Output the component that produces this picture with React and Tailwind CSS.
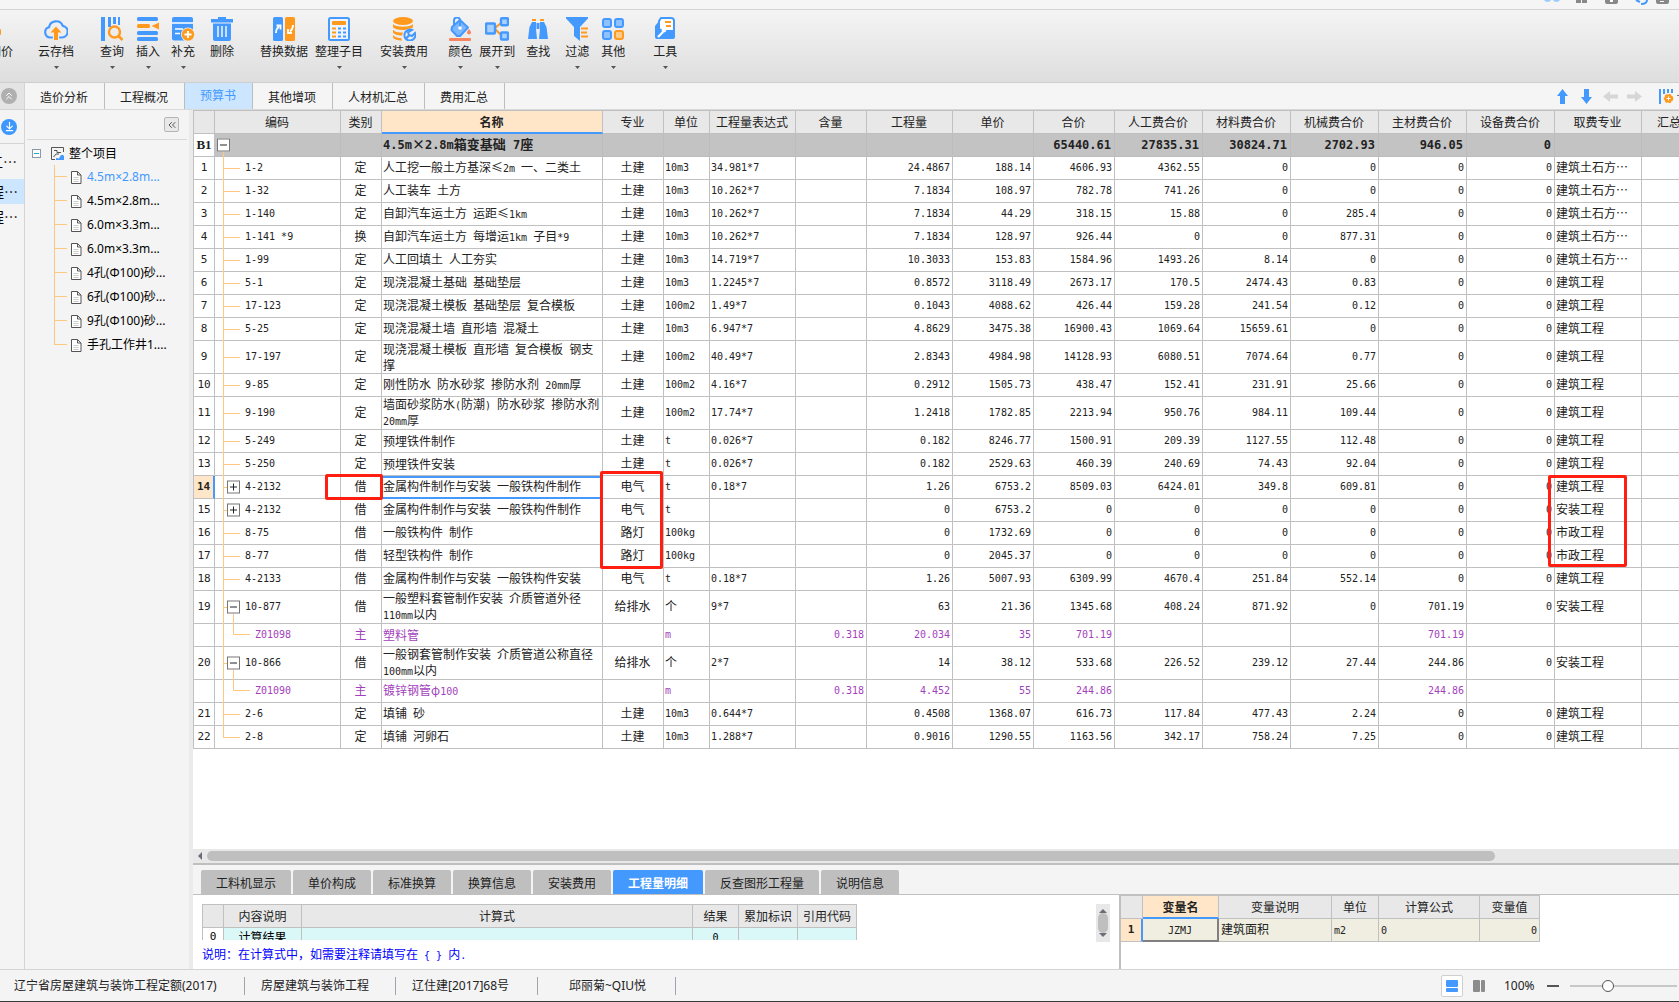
import React, { useState } from 'react';
import { ChevronsUp, ChevronsLeft, ArrowDownToLine } from 'lucide-react';

const BLUE = '#4499ff';
const ORANGE = '#ff9a1f';

const Icon = ({ children }) => (
  <svg width="24" height="24" viewBox="0 0 24 24" fill="none" aria-hidden="true">
    {children}
  </svg>
);

const CloudIcon = () => (
  <Icon>
    <path d="M8 20.5H6.2A5.2 5.2 0 0 1 5 10.300A7.200 7.200 0 0 1 18.800 8.800A5.900 5.900 0 0 1 18 20.500H16" stroke={BLUE} strokeWidth="2.2" strokeLinecap="round" />
    <path d="M12 9.500L17.500 15.500H14V23H10V15.500H6.500Z" fill={ORANGE} />
  </Icon>
);

const QueryIcon = () => (
  <Icon>
    <path d="M1 0h4v24H1zM8 0h3v10H8zM13 0h3v7h-3zM18 0h2v8h-2z" fill={BLUE} />
    <circle cx="14.500" cy="15" r="5.500" stroke={ORANGE} strokeWidth="2.4" />
    <path d="M18.500 19l4 4" stroke={ORANGE} strokeWidth="2.6" />
  </Icon>
);

const InsertIcon = () => (
  <Icon>
    <rect x="1" y="0" width="21" height="4" rx="1.500" fill={BLUE} />
    <rect x="1" y="7" width="13" height="4" rx="1.500" fill={ORANGE} />
    <path d="M23 5.500v7L15.500 9Z" fill={ORANGE} />
    <rect x="1" y="14" width="21" height="4" rx="1.500" fill={BLUE} />
    <rect x="1" y="20" width="21" height="4" rx="1.500" fill={BLUE} />
  </Icon>
);

const SupplementIcon = () => (
  <Icon>
    <rect x="1" y="0" width="21" height="23.500" rx="2" fill={BLUE} />
    <path d="M1 6h21M4 12h8M4 16.500h5" stroke="#fff" strokeWidth="1.4" />
    <circle cx="17" cy="17.500" r="7" fill="#f0f0f0" />
    <circle cx="17" cy="17.500" r="6.200" fill={ORANGE} />
    <path d="M17 14v7M13.500 17.500h7" stroke="#fff" strokeWidth="2" />
  </Icon>
);

const DeleteIcon = () => (
  <Icon>
    <path d="M8 0h8v2h7v3.500H1V2h7zM3 6.500h18V22a2 2 0 0 1-2 2H5a2 2 0 0 1-2-2z" fill={BLUE} />
    <path d="M8 9v11M12 9v11M16 9v11" stroke="#e8f2ff" strokeWidth="1.6" />
  </Icon>
);

const ReplaceIcon = () => (
  <Icon>
    <rect x="1" y="0" width="10" height="24" rx="1.500" fill={BLUE} />
    <rect x="13" y="0" width="10" height="24" rx="1.500" fill={ORANGE} />
    <path d="M4 16c0-3 1-5 3-6.500M4.500 8.500h4v4" stroke="#fff" strokeWidth="1.8" />
    <path d="M21 8c0 3-1 5-3 6.500M20 16h-4v-4" stroke="#fff" strokeWidth="1.8" />
  </Icon>
);

const ArrangeIcon = () => (
  <Icon>
    <rect x="2" y="1" width="20" height="22" rx="1.500" fill="#eef5ff" stroke={BLUE} strokeWidth="2" />
    <rect x="5" y="4" width="14" height="4" rx="1" fill={ORANGE} />
    <path d="M5 11.500h4M5 15.500h4M5 19.500h4" stroke={ORANGE} strokeWidth="2" />
    <path d="M11 11.500h3M16 11.500h3M11 15.500h3M16 15.500h3M11 19.500h3M16 19.500h3" stroke={BLUE} strokeWidth="2" />
  </Icon>
);

const InstallIcon = () => (
  <Icon>
    <ellipse cx="11" cy="4" rx="10" ry="4" fill={ORANGE} />
    <path d="M1 7c2 3.500 18 3.500 20 0v3c-2 4-18 4-20 0z" fill={ORANGE} />
    <path d="M1 12.500c2 3 6 3 10 3l-1 3c-4 0-8-1-9-3zM1 18c2 2.500 5 3 8 3l1 2.500c-4 0-8-1-9-3z" fill={ORANGE} />
    <circle cx="17.500" cy="18" r="6.500" fill="#eee" />
    <path d="M20 13a5.500 5.500 0 1 0 3 3l-3 3-3-1-1-2.500z" stroke={BLUE} strokeWidth="2" />
    <path d="M17 18.500l-3.500 3.500" stroke={BLUE} strokeWidth="2.4" />
  </Icon>
);

const ColorIcon = () => (
  <Icon>
    <path d="M4 10L12 3l8 7.500-8 8.500h-3l-5.500-6z" fill="#7db8ff" stroke={BLUE} strokeWidth="2" strokeLinejoin="round" />
    <path d="M6 8V3.500a3 3 0 0 1 6 0V10" stroke={BLUE} strokeWidth="2" />
    <circle cx="12" cy="11" r="1.800" fill="#fff" />
    <path d="M21 12c1.500 2 2 2.500 2 3.500a2 2 0 0 1-4 0c0-1 1-2 2-3.500z" fill="#f98560" />
    <rect x="1" y="21" width="22" height="3" rx="1" fill="#f98560" />
  </Icon>
);

const ExpandIcon = () => (
  <Icon>
    <path d="M10 11l6-5M10 12l6 6" stroke={ORANGE} strokeWidth="2" />
    <rect x="1" y="6.500" width="9" height="10" rx="1" fill="#a9d0ff" stroke={BLUE} strokeWidth="2.400" />
    <rect x="16" y="1.200" width="7" height="7" rx="1" fill="#a9d0ff" stroke={BLUE} strokeWidth="2.400" />
    <rect x="16" y="15.500" width="7" height="7" rx="1" fill="#a9d0ff" stroke={BLUE} strokeWidth="2.400" />
  </Icon>
);

const FindIcon = () => (
  <Icon>
    <path d="M6 5h4v7l1 10H2l1.500-12zM14 5h4l2.500 5L22 22h-9l1-10z" fill={BLUE} />
    <path d="M6 2h4v2H6zM14 2h4v2h-4z" fill={ORANGE} />
    <path d="M10.500 6h3v6h-3z" fill={BLUE} />
  </Icon>
);

const FilterIcon = () => (
  <Icon>
    <path d="M1 0h22v1.500L15 10v14l-6-5v-9L1 1.500z" fill={BLUE} />
    <path d="M16 11.500h7M16 15.500h6M16 19.500h7" stroke={ORANGE} strokeWidth="2" />
  </Icon>
);

const OtherIcon = () => (
  <Icon>
    <rect x="2" y="2" width="8" height="8" rx="2" fill="#8fc1ff" stroke={BLUE} strokeWidth="2" />
    <rect x="14" y="2" width="8" height="8" rx="2" fill="#8fc1ff" stroke={BLUE} strokeWidth="2" />
    <rect x="2" y="14" width="8" height="8" rx="2" fill="#8fc1ff" stroke={BLUE} strokeWidth="2" />
    <rect x="14" y="14" width="8" height="8" rx="2" fill="#ffca8a" stroke={ORANGE} strokeWidth="2" />
  </Icon>
);

const ToolIcon = () => (
  <Icon>
    <path d="M8 1h10a3 3 0 0 1 3 3v11H6V4z" fill="#fff" stroke={BLUE} strokeWidth="2" />
    <path d="M12 5h6M13 9h5" stroke={ORANGE} strokeWidth="2" />
    <path d="M2 9l4-5v7l4 2h12v7a2 2 0 0 1-2 2H4a2 2 0 0 1-2-2z" fill={BLUE} />
    <path d="M5 20l5-5" stroke="#fff" strokeWidth="2.200" />
    <path d="M9 15a3 3 0 0 1 2-4l.5 2 2 .5a3 3 0 0 1-4.500 1.500z" fill="#fff" />
  </Icon>
);

const tools = [
  { label: '云存档', icon: CloudIcon, gap: 'ml-[25px]', more: true },
  { label: '查询', icon: QueryIcon, gap: 'ml-[26px]', more: true },
  { label: '插入', icon: InsertIcon, gap: 'ml-3', more: true },
  { label: '补充', icon: SupplementIcon, gap: 'ml-[11px]', more: true },
  { label: '删除', icon: DeleteIcon, gap: 'ml-[15px]' },
  { label: '替换数据', icon: ReplaceIcon, gap: 'ml-[26px]' },
  { label: '整理子目', icon: ArrangeIcon, gap: 'ml-[7px]', more: true },
  { label: '安装费用', icon: InstallIcon, gap: 'ml-[17px]', more: true },
  { label: '颜色', icon: ColorIcon, gap: 'ml-5', more: true },
  { label: '展开到', icon: ExpandIcon, gap: 'ml-[7px]', more: true },
  { label: '查找', icon: FindIcon, gap: 'ml-[11px]' },
  { label: '过滤', icon: FilterIcon, gap: 'ml-[15px]', more: true },
  { label: '其他', icon: OtherIcon, gap: 'ml-3', more: true },
  { label: '工具', icon: ToolIcon, gap: 'ml-7', more: true },
];

const mainTabs = [
  { label: '造价分析', width: 'w-20' },
  { label: '工程概况', width: 'w-20' },
  { label: '预算书', width: 'w-[68px]' },
  { label: '其他增项', width: 'w-20' },
  { label: '人材机汇总', width: 'w-[92px]' },
  { label: '费用汇总', width: 'w-20' },
];

const treeItems = [
  '4.5m×2.8m...',
  '4.5m×2.8m...',
  '6.0m×3.3m...',
  '6.0m×3.3m...',
  '4孔(Φ100)砂...',
  '6孔(Φ100)砂...',
  '9孔(Φ100)砂...',
  '手孔工作井1....',
];

const columns = [
  { label: '', width: 22 },
  { label: '编码', width: 126 },
  { label: '类别', width: 41 },
  { label: '名称', width: 221 },
  { label: '专业', width: 61 },
  { label: '单位', width: 46 },
  { label: '工程量表达式', width: 86 },
  { label: '含量', width: 71 },
  { label: '工程量', width: 86 },
  { label: '单价', width: 81 },
  { label: '合价', width: 81 },
  { label: '人工费合价', width: 88 },
  { label: '材料费合价', width: 88 },
  { label: '机械费合价', width: 88 },
  { label: '主材费合价', width: 88 },
  { label: '设备费合价', width: 88 },
  { label: '取费专业', width: 87 },
  { label: '汇总类别', width: 80 },
];

// [no, tree, code, type, name, major, unit, expression, content, quantity,
//  price, total, labor, material, machine, main, equipment, fee type]
const rows = [
  ['1', 'leaf', '1-2', '定', '人工挖一般土方基深≤2m 一、二类土', '土建', '10m3', '34.981*7', '', '24.4867', '188.14', '4606.93', '4362.55', '0', '0', '0', '0', '建筑土石方⋯'],
  ['2', 'leaf', '1-32', '定', '人工装车 土方', '土建', '10m3', '10.262*7', '', '7.1834', '108.97', '782.78', '741.26', '0', '0', '0', '0', '建筑土石方⋯'],
  ['3', 'leaf', '1-140', '定', '自卸汽车运土方 运距≤1km', '土建', '10m3', '10.262*7', '', '7.1834', '44.29', '318.15', '15.88', '0', '285.4', '0', '0', '建筑土石方⋯'],
  ['4', 'leaf', '1-141 *9', '换', '自卸汽车运土方 每增运1km 子目*9', '土建', '10m3', '10.262*7', '', '7.1834', '128.97', '926.44', '0', '0', '877.31', '0', '0', '建筑土石方⋯'],
  ['5', 'leaf', '1-99', '定', '人工回填土 人工夯实', '土建', '10m3', '14.719*7', '', '10.3033', '153.83', '1584.96', '1493.26', '8.14', '0', '0', '0', '建筑土石方⋯'],
  ['6', 'leaf', '5-1', '定', '现浇混凝土基础 基础垫层', '土建', '10m3', '1.2245*7', '', '0.8572', '3118.49', '2673.17', '170.5', '2474.43', '0.83', '0', '0', '建筑工程'],
  ['7', 'leaf', '17-123', '定', '现浇混凝土模板 基础垫层 复合模板', '土建', '100m2', '1.49*7', '', '0.1043', '4088.62', '426.44', '159.28', '241.54', '0.12', '0', '0', '建筑工程'],
  ['8', 'leaf', '5-25', '定', '现浇混凝土墙 直形墙 混凝土', '土建', '10m3', '6.947*7', '', '4.8629', '3475.38', '16900.43', '1069.64', '15659.61', '0', '0', '0', '建筑工程'],
  ['9', 'leaf', '17-197', '定', '现浇混凝土模板 直形墙 复合模板 钢支撑', '土建', '100m2', '40.49*7', '', '2.8343', '4984.98', '14128.93', '6080.51', '7074.64', '0.77', '0', '0', '建筑工程'],
  ['10', 'leaf', '9-85', '定', '刚性防水 防水砂浆 掺防水剂 20mm厚', '土建', '100m2', '4.16*7', '', '0.2912', '1505.73', '438.47', '152.41', '231.91', '25.66', '0', '0', '建筑工程'],
  ['11', 'leaf', '9-190', '定', '墙面砂浆防水(防潮) 防水砂浆 掺防水剂 20mm厚', '土建', '100m2', '17.74*7', '', '1.2418', '1782.85', '2213.94', '950.76', '984.11', '109.44', '0', '0', '建筑工程'],
  ['12', 'leaf', '5-249', '定', '预埋铁件制作', '土建', 't', '0.026*7', '', '0.182', '8246.77', '1500.91', '209.39', '1127.55', '112.48', '0', '0', '建筑工程'],
  ['13', 'leaf', '5-250', '定', '预埋铁件安装', '土建', 't', '0.026*7', '', '0.182', '2529.63', '460.39', '240.69', '74.43', '92.04', '0', '0', '建筑工程'],
  ['14', 'closed', '4-2132', '借', '金属构件制作与安装 一般铁构件制作', '电气', 't', '0.18*7', '', '1.26', '6753.2', '8509.03', '6424.01', '349.8', '609.81', '0', '0', '建筑工程'],
  ['15', 'closed', '4-2132', '借', '金属构件制作与安装 一般铁构件制作', '电气', 't', '', '', '0', '6753.2', '0', '0', '0', '0', '0', '0', '安装工程'],
  ['16', 'leaf', '8-75', '借', '一般铁构件 制作', '路灯', '100kg', '', '', '0', '1732.69', '0', '0', '0', '0', '0', '0', '市政工程'],
  ['17', 'leaf', '8-77', '借', '轻型铁构件 制作', '路灯', '100kg', '', '', '0', '2045.37', '0', '0', '0', '0', '0', '0', '市政工程'],
  ['18', 'leaf', '4-2133', '借', '金属构件制作与安装 一般铁构件安装', '电气', 't', '0.18*7', '', '1.26', '5007.93', '6309.99', '4670.4', '251.84', '552.14', '0', '0', '建筑工程'],
  ['19', 'open', '10-877', '借', '一般塑料套管制作安装 介质管道外径110mm以内', '给排水', '个', '9*7', '', '63', '21.36', '1345.68', '408.24', '871.92', '0', '701.19', '0', '安装工程'],
  ['', 'child', 'Z01098', '主', '塑料管', '', 'm', '', '0.318', '20.034', '35', '701.19', '', '', '', '701.19', '', ''],
  ['20', 'open', '10-866', '借', '一般钢套管制作安装 介质管道公称直径100mm以内', '给排水', '个', '2*7', '', '14', '38.12', '533.68', '226.52', '239.12', '27.44', '244.86', '0', '安装工程'],
  ['', 'child', 'Z01090', '主', '镀锌钢管φ100', '', 'm', '', '0.318', '4.452', '55', '244.86', '', '', '', '244.86', '', ''],
  ['21', 'leaf', '2-6', '定', '填铺 砂', '土建', '10m3', '0.644*7', '', '0.4508', '1368.07', '616.73', '117.84', '477.43', '2.24', '0', '0', '建筑工程'],
  ['22', 'last', '2-8', '定', '填铺 河卵石', '土建', '10m3', '1.288*7', '', '0.9016', '1290.55', '1163.56', '342.17', '758.24', '7.25', '0', '0', '建筑工程'],
];

const summary = ['', '', '', '', '', '', '65440.61', '27835.31', '30824.71', '2702.93', '946.05', '0', '', ''];

const detailTabs = [
  { label: '工料机显示', width: 'w-[90px]' },
  { label: '单价构成', width: 'w-[78px]' },
  { label: '标准换算', width: 'w-[78px]' },
  { label: '换算信息', width: 'w-[78px]' },
  { label: '安装费用', width: 'w-[78px]' },
  { label: '工程量明细', width: 'w-[90px]' },
  { label: '反查图形工程量', width: 'w-[114px]' },
  { label: '说明信息', width: 'w-[78px]' },
];

const MONO = "font-['DejaVu_Sans_Mono','Noto_Sans_CJK_SC',monospace]";

// Half-width runs use a monospaced face so that two of them fill one Chinese character.
const Mixed = ({ text, bold }) =>
  text
    .split(/([\x20-\x7e]+)/)
    .filter(Boolean)
    .map((part, i) =>
      /^[\x20-\x7e]+$/.test(part) ? (
        <span key={i} className={`${MONO} ${bold ? 'text-[12px]' : 'text-[10px]'}`}>{part}</span>
      ) : (
        part
      )
    );

const ToggleBox = ({ open, className = '' }) => (
  <button
    type="button"
    aria-label={open ? '折叠' : '展开'}
    className={`absolute top-1/2 -translate-y-1/2 flex h-[13px] w-[13px] items-center justify-center border border-[#777] bg-white ${className}`}
  >
    <svg width="9" height="9" viewBox="0 0 9 9" aria-hidden="true">
      <path d={open ? 'M1 4h7v1H1z' : 'M1 4h7v1H1zM4 1h1v7H4z'} fill="#222" />
    </svg>
  </button>
);

const CodeCell = ({ tree, code }) => {
  const boxed = tree === 'open' || tree === 'closed';
  return (
    <td className={`relative border-r border-b border-[#c0c0c0] pb-0.5 ${tree === 'child' ? 'pl-10' : 'pl-[30px]'}`}>
      <span className={`absolute left-2 top-0 w-px bg-[#ffc880] ${tree === 'last' ? 'h-1/2' : '-bottom-px'}`} />
      {tree !== 'child' && (
        <span className={`absolute left-2 top-1/2 h-px bg-[#ffc880] ${boxed ? 'w-1' : 'w-[17px]'}`} />
      )}
      {tree === 'open' && <span className="absolute left-[18px] top-1/2 -bottom-px w-px bg-[#ffc880]" />}
      {tree === 'child' && (
        <span className="absolute left-[18px] top-0 h-1/2 w-[17px] border-b border-l border-[#ffc880]" />
      )}
      {boxed && <ToggleBox open={tree === 'open'} className="left-3" />}
      <Mixed text={code} />
    </td>
  );
};

const BudgetRow = ({ row }) => {
  const [no, tree, code, type, name, major, unit, expr, ...rest] = row;
  const fee = rest[rest.length - 1];
  const numbers = rest.slice(0, -1);
  const selected = no === '14';
  const cell = 'border-r border-b border-[#c0c0c0] pb-0.5';
  // names longer than 18 full-width characters take a second line
  const twoLines = name.replace(/[\x20-\x7e]{2}/g, 'x').length > 18;
  return (
    <tr className={`${twoLines ? 'h-[33px]' : 'h-[23px]'} ${tree === 'child' ? 'text-[#a33fbd]' : ''}`}>
      <th
        scope="row"
        className={`border-b border-l border-[#c0c0c0] ${MONO} text-[11px] ${
          selected
            ? 'border-r-2 border-r-[#4499ff] bg-[#ffe6c8] font-bold'
            : 'border-r font-normal'
        }`}
      >
        {no}
      </th>
      <CodeCell tree={tree} code={code} />
      <td className={`${cell} pr-px text-center`}>{type}</td>
      <td
        className={`border-r border-b pl-px leading-[14px] ${
          selected
            ? 'border-r-[#c0c0c0] border-b-[#4499ff] shadow-[inset_0_2px_0_#4499ff,inset_0_-1px_0_#4499ff]'
            : 'border-[#c0c0c0]'
        }`}
      >
        <Mixed text={name} />
      </td>
      <td className={`${cell} pr-px text-center`}>{major}</td>
      <td className={`${cell} pl-px`}><Mixed text={unit} /></td>
      <td className={`${cell} pl-px`}><Mixed text={expr} /></td>
      {numbers.map((n, i) => (
        <td key={i} className={`${cell} pr-0.5 text-right`}><Mixed text={n} /></td>
      ))}
      <td className={`${cell} whitespace-nowrap pl-px`}>{fee}</td>
      <td className={cell} />
    </tr>
  );
};

const BudgetTable = () => (
  <table className="w-[1529px] shrink-0 table-fixed border-separate border-spacing-0 text-[12px] leading-[14px] text-[#222]">
    <colgroup>
      {columns.map((c, i) => (
        <col key={i} style={{ width: c.width }} />
      ))}
    </colgroup>
    <thead>
      <tr className="h-6">
        {columns.map((c, i) => (
          <th
            key={i}
            scope="col"
            className={`border-t border-r border-t-[#c0c0c0] border-r-[#c0c0c0] pr-px ${i === 0 ? 'border-l border-l-[#c0c0c0]' : ''} ${
              c.label === '名称'
                ? 'border-b-2 border-b-[#4499ff] bg-[#ffe6c8] font-bold'
                : 'border-b border-b-[#c0c0c0] bg-[#e8e8e8] font-normal'
            }`}
          >
            {c.label}
          </th>
        ))}
      </tr>
    </thead>
    <tbody>
      <tr className="h-[23px] bg-[#c3c3c3] font-bold">
        <th scope="row" className="border-x border-b border-[#c0c0c0] bg-white font-['Liberation_Serif',serif] text-[13px]">B1</th>
        <td className="relative border-r border-b border-[#bcbcbc]">
          <span className="absolute left-2 top-1/2 -bottom-px w-px bg-[#ffc880]" />
          <ToggleBox open className="left-0.5" />
        </td>
        <td className="border-r border-b border-[#bcbcbc]" />
        <td className="whitespace-nowrap border-r border-b border-[#bcbcbc] pb-0.5 pl-px text-[13px]">
          <Mixed text="4.5m×2.8m箱变基础 7座" bold />
        </td>
        {summary.map((n, i) => (
          <td key={i} className="border-r border-b border-[#bcbcbc] pr-[3px] pb-0.5 text-right">
            <Mixed text={n} bold />
          </td>
        ))}
      </tr>
      {rows.map((row, i) => (
        <BudgetRow key={i} row={row} />
      ))}
    </tbody>
  </table>
);

const Ribbon = () => (
  <header>
    <div className="flex h-[10px] items-start justify-end overflow-hidden border-b border-[#d4d4d4] bg-[#f5f5f5] pr-[7px]">
      <svg width="130" height="5" viewBox="0 0 130 5" aria-hidden="true">
        <path d="M2 0h7a4 4 0 0 1-7 0zM11 0h7a4 4 0 0 1-7 0z" fill="#9ccbff" />
        <path d="M34 0h5v3h-5zM40 0h5v3h-5zM63 0h13v2a2 2 0 0 1-2 2h-9a2 2 0 0 1-2-2zM114 0h13v2a2 2 0 0 1-2 2h-9a2 2 0 0 1-2-2z" fill="#888" />
        <path d="M68 0h3v2h-3zM118 1h4v1h-4z" fill="#fff" />
        <path d="M94 0l4 2M105 0q0 4-6 4" stroke={BLUE} strokeWidth="2" fill="none" />
      </svg>
    </div>
    <div className="flex h-[73px] items-start overflow-hidden border-b border-[#cfcfcf] bg-linear-to-b from-[#f4f4f4] to-[#dedede] pt-[7px] text-[12px] text-[#222]">
      <button type="button" className="flex w-[13px] flex-col items-end overflow-hidden">
        <span className="mt-3 mb-2 h-1.5 w-full">
          <span className="block h-1.5 w-px rounded-r bg-[#ff9a1f]" />
        </span>
        <span className="whitespace-nowrap leading-[18px]">调价</span>
      </button>
      {tools.map(({ label, icon: ToolbarIcon, gap, more }) => (
        <button key={label} type="button" className={`flex shrink-0 flex-col items-center ${gap}`}>
          <ToolbarIcon />
          <span className="mt-0.5 whitespace-nowrap leading-[18px]">{label}</span>
          {more && (
            <svg width="5" height="3" viewBox="0 0 5 3" className="mt-[5px]" aria-hidden="true">
              <path d="M0 0h5L2.500 3z" fill="#555" />
            </svg>
          )}
        </button>
      ))}
    </div>
  </header>
);

const LeftStrip = () => (
  <aside className="flex w-[25px] shrink-0 flex-col overflow-hidden border-r border-[#d4d4d4] bg-[#f4f4f4] text-[14px] text-black">
    <button type="button" aria-label="收起" className="flex h-[27px] items-center border-b border-[#d4d4d4] bg-[#e4e4e4] pl-px">
      <span className="flex h-4 w-4 items-center justify-center rounded-full bg-[#b0b0b0]">
        <ChevronsUp size={12} color="#fff" />
      </span>
    </button>
    <button type="button" aria-label="下载" className="flex h-[34px] items-center border-b border-[#d4d4d4] pl-px">
      <span className="flex h-4 w-4 items-center justify-center rounded-full bg-[#3d97ff]">
        <ArrowDownToLine size={11} color="#fff" strokeWidth={2.5} />
      </span>
    </button>
    <button type="button" className="flex h-[35px] w-[17px] items-center justify-end whitespace-nowrap">工⋯</button>
    <button type="button" className="flex h-[25px] items-center justify-end whitespace-nowrap bg-[#cce6ff] pr-1.5">程⋯</button>
    <button type="button" className="flex h-[25px] items-center justify-end whitespace-nowrap pr-1.5">程⋯</button>
  </aside>
);

const DocIcon = () => (
  <svg width="11" height="13" viewBox="0 0 11 13" fill="none" aria-hidden="true">
    <path d="M.5.5h6l3.500 3.500v8.500H.5z" fill="#fff" stroke="#555" />
    <path d="M6.500.5V4H10" stroke="#555" />
    <path d="M2.500 6.500h5M2.500 8.500h5M2.500 10.500h5" stroke="#ccc" />
  </svg>
);

const ProjectTree = () => (
  <nav className="w-[168px] shrink-0 border-r-4 border-[#ebebeb] bg-[#f4f4f4] px-0.5 text-[12px] text-black">
    <div className="flex h-[30px] items-center justify-end border-b border-[#d9d9d9] pr-2">
      <button type="button" aria-label="收起" className="flex h-[15px] w-[15px] items-center justify-center rounded-xs border border-[#b5b5b5] bg-[#e8e8e8]">
        <ChevronsLeft size={12} color="#555" />
      </button>
    </div>
    <div className="flex h-[25px] items-center pt-0.5 pl-[5px]">
      <button type="button" aria-label="折叠" className="flex h-[9px] w-[9px] items-center justify-center border border-[#8a9aa8] bg-white">
        <span className="h-px w-[5px] bg-[#2aa0d8]" />
      </button>
      <svg width="13" height="13" viewBox="0 0 13 13" fill="none" className="ml-[10px]" aria-hidden="true">
        <path d="M12.500 5V.5H.5v12H4" stroke="#555" />
        <path d="M3 3.500h3v2h4M2.500 10L5 7h3" stroke="#555" />
        <path d="M5 13V11l3 .5L10 8h2l1 1v4z" fill={BLUE} />
      </svg>
      <span className="ml-[5px]">整个项目</span>
    </div>
    <ul className="pl-[27px]">
      {treeItems.map((label, i) => (
        <li key={i} className="flex h-6 items-center">
          <span className="flex h-full w-[13px] flex-col">
            <span className="h-1/2 border-b border-l border-[#ffc880]" />
            <span className={i < treeItems.length - 1 ? 'h-1/2 border-l border-[#ffc880]' : 'h-1/2'} />
          </span>
          <a href="#" className={`ml-1 flex items-center gap-[5px] whitespace-nowrap ${i === 0 ? 'text-[#4499ff]' : ''}`}>
            <DocIcon />
            {label}
          </a>
        </li>
      ))}
    </ul>
  </nav>
);

const MainTabs = ({ active, onSelect }) => (
  <div className="flex h-[27px] shrink-0 items-stretch border-b border-[#d9d9d9] bg-[#f5f5f5] text-[12px] text-[#222]">
    {mainTabs.map(({ label, width }) => (
      <button
        key={label}
        type="button"
        onClick={() => onSelect(label)}
        className={`shrink-0 border-r border-[#bdbdbd] pt-1 pr-px ${width} ${
          active === label ? 'bg-[#cce6ff] pb-1 text-[#4499ff]' : ''
        }`}
      >
        {label}
      </button>
    ))}
    <div className="ml-auto flex items-center gap-[9px] overflow-hidden">
      <button type="button" aria-label="上移">
        <svg width="15" height="15" viewBox="0 0 15 15"><path d="M7.500 0L13 7H10v8H5V7H2z" fill={BLUE} /></svg>
      </button>
      <button type="button" aria-label="下移">
        <svg width="15" height="15" viewBox="0 0 15 15"><path d="M7.500 15L13 8H10V0H5v8H2z" fill={BLUE} /></svg>
      </button>
      <button type="button" aria-label="后退">
        <svg width="15" height="13" viewBox="0 0 15 13"><path d="M0 6.500L7 1v3.500h8v4H7V12z" fill="#d6d6d6" /></svg>
      </button>
      <button type="button" aria-label="前进">
        <svg width="15" height="13" viewBox="0 0 15 13"><path d="M15 6.500L8 1v3.500H0v4h8V12z" fill="#d6d6d6" /></svg>
      </button>
      <button type="button" aria-label="列设置" className="ml-2">
        <svg width="20" height="15" viewBox="0 0 20 15">
          <path d="M0 0h2v15H0zM4 0h2v5H4zM8 0h2v4H8zM12 0h2v4h-2z" fill={BLUE} />
          <circle cx="9.500" cy="9.500" r="4" fill={ORANGE} stroke={ORANGE} strokeWidth="1.500" strokeDasharray="2.200 1.500" />
          <path d="M9.500 7.500v4M7.500 9.500h4" stroke="#fff" />
          <path d="M18 6h2v1h-2z" fill="#777" />
        </svg>
      </button>
    </div>
  </div>
);

const CalcTable = () => (
  <div className="h-9 overflow-hidden">
    <table className="w-[655px] table-fixed border-separate border-spacing-0 text-center text-[12px] leading-[14px] text-[#222]">
      <colgroup>
        {[22, 78, 391, 46, 59, 59].map((w, i) => (
          <col key={i} style={{ width: w }} />
        ))}
      </colgroup>
      <thead>
        <tr className="h-6 bg-[#e8e8e8]">
          {['', '内容说明', '计算式', '结果', '累加标识', '引用代码'].map((label, i) => (
            <th key={i} scope="col" className={`border-y border-r border-[#c0c0c0] font-normal ${i === 0 ? 'border-l' : ''}`}>
              {label}
            </th>
          ))}
        </tr>
      </thead>
      <tbody>
        <tr className="h-[18px] bg-[#daf8f8] text-black">
          <th scope="row" className={`border-x border-b border-[#c0c0c0] bg-white font-normal ${MONO} text-[11px]`}>0</th>
          <td className="border-r border-b border-[#c0c0c0]">计算结果</td>
          <td className="border-r border-b border-[#c0c0c0]" />
          <td className="border-r border-b border-[#c0c0c0]"><Mixed text="0" /></td>
          <td className="border-r border-b border-[#c0c0c0]" />
          <td className="border-r border-b border-[#c0c0c0]" />
        </tr>
      </tbody>
    </table>
  </div>
);

const VariableTable = () => (
  <table className="w-[419px] table-fixed border-separate border-spacing-0 text-[12px] leading-[14px] text-[#222]">
    <colgroup>
      {[22, 76, 113, 47, 101, 60].map((w, i) => (
        <col key={i} style={{ width: w }} />
      ))}
    </colgroup>
    <thead>
      <tr className="h-6 bg-[#e8e8e8]">
        {['', '变量名', '变量说明', '单位', '计算公式', '变量值'].map((label, i) => (
          <th
            key={i}
            scope="col"
            className={`border-t border-r border-t-[#c0c0c0] border-r-[#c0c0c0] ${
              i === 1
                ? 'border-b-2 border-b-[#4499ff] bg-[#ffe6c8] font-bold'
                : 'border-b border-b-[#c0c0c0] font-normal'
            }`}
          >
            {label}
          </th>
        ))}
      </tr>
    </thead>
    <tbody>
      <tr className="h-[23px] bg-[#efeee0]">
        <th scope="row" className={`border-r-2 border-b border-r-[#4499ff] border-b-[#c0c0c0] bg-[#ffe6c8] font-bold ${MONO} text-[11px]`}>1</th>
        <td className="border-r-2 border-b-2 border-[#808080] text-center"><Mixed text="JZMJ" /></td>
        <td className="border-r border-b border-[#c0c0c0] pb-0.5 pl-0.5">建筑面积</td>
        <td className="border-r border-b border-[#c0c0c0] pl-0.5"><Mixed text="m2" /></td>
        <td className="border-r border-b border-[#c0c0c0] pl-0.5"><Mixed text="0" /></td>
        <td className="border-r border-b border-[#c0c0c0] pr-0.5 text-right"><Mixed text="0" /></td>
      </tr>
    </tbody>
  </table>
);

const DetailPanel = ({ active, onSelect }) => (
  <section className="shrink-0 border-t-2 border-[#bfbfbf]">
    <div className="flex h-[30px] items-end gap-0.5 border-b border-[#c0c0c0] bg-[#f4f4f4] pl-2 text-[12px] text-[#222]">
      {detailTabs.map(({ label, width }) => (
        <button
          key={label}
          type="button"
          onClick={() => onSelect(label)}
          className={`h-6 shrink-0 rounded-t-xs pt-0.5 ${width} ${
            active === label ? 'bg-[#4499ff] font-bold text-white' : 'bg-[#bfbfbf]'
          }`}
        >
          {label}
        </button>
      ))}
    </div>
    <div className="flex h-[74px] bg-white">
      <div className="flex w-[926px] shrink-0 pt-[9px] pl-[9px]">
        <div className="flex-1">
          <CalcTable />
          <p className="mt-[5px] text-[12px] leading-[18px] text-[#0000ff]">
            <Mixed text="说明：在计算式中，如需要注释请填写在 { } 内." />
          </p>
        </div>
        <div className="mr-[9px] flex h-[38px] w-[14px] flex-col items-center justify-between bg-[#e8e8e8] py-[5px]">
          <svg width="8" height="4" viewBox="0 0 8 4" aria-hidden="true"><path d="M4 0l4 4H0z" fill="#6d6d78" /></svg>
          <span className="w-[10px] flex-1 rounded-full bg-[#bfbfbf]" />
          <svg width="8" height="4" viewBox="0 0 8 4" aria-hidden="true"><path d="M0 0h8L4 4z" fill="#6d6d78" /></svg>
        </div>
      </div>
      <div className="flex-1 overflow-hidden border-l-2 border-[#bfbfbf]">
        <VariableTable />
      </div>
    </div>
  </section>
);

const StatusBar = () => {
  const [zoom, setZoom] = useState(34);
  return (
    <footer className="flex h-[33px] shrink-0 items-center overflow-hidden border-t border-b border-t-[#d4d4d4] border-b-[#3a3a3a] bg-[#f4f4f4] text-[12px] text-[#222]">
      <span className="w-[245px] shrink-0 whitespace-nowrap border-r border-[#a0a4ac] pl-[14px] leading-[18px]">辽宁省房屋建筑与装饰工程定额(2017)</span>
      <span className="w-[151px] shrink-0 whitespace-nowrap border-r border-[#a0a4ac] pl-4 leading-[18px]">房屋建筑与装饰工程</span>
      <span className="w-[142px] shrink-0 whitespace-nowrap border-r border-[#a0a4ac] pl-4 leading-[18px]">辽住建[2017]68号</span>
      <span className="w-[138px] shrink-0 whitespace-nowrap border-r border-[#a0a4ac] pl-[31px] leading-[18px]">邱丽菊~QIU悦</span>
      <div className="ml-auto flex items-center">
        <button type="button" aria-label="上下布局" className="flex h-[22px] w-[22px] items-center justify-center rounded-xs border border-[#cfcfcf] bg-white">
          <svg width="12" height="12" viewBox="0 0 12 12">
            <rect width="12" height="7" rx="1" fill={BLUE} />
            <rect y="8" width="12" height="4" rx="1" fill={BLUE} />
          </svg>
        </button>
        <button type="button" aria-label="左右布局" className="ml-[10px]">
          <svg width="12" height="12" viewBox="0 0 12 12">
            <rect width="7" height="12" rx="1" fill="#8c8c8c" />
            <rect x="8" width="4" height="12" rx="1" fill="#8c8c8c" />
          </svg>
        </button>
        <label htmlFor="zoom" className="ml-[19px] w-8 whitespace-nowrap">100%</label>
        <button type="button" aria-label="缩小" className="ml-[11px] h-0.5 w-3 bg-[#555]" />
        <input
          id="zoom"
          type="range"
          value={zoom}
          onChange={(e) => setZoom(e.target.value)}
          className="mr-[2px] ml-[11px] h-0.5 w-[107px] appearance-none bg-[#c8c8c8] [&::-webkit-slider-thumb]:h-3 [&::-webkit-slider-thumb]:w-3 [&::-webkit-slider-thumb]:appearance-none [&::-webkit-slider-thumb]:rounded-full [&::-webkit-slider-thumb]:border [&::-webkit-slider-thumb]:border-[#555] [&::-webkit-slider-thumb]:bg-white"
        />
      </div>
    </footer>
  );
};

const App = () => {
  const [mainTab, setMainTab] = useState('预算书');
  const [detailTab, setDetailTab] = useState('工程量明细');

  return (
    <div className="flex h-screen flex-col overflow-hidden bg-white font-['Noto_Sans','Noto_Sans_CJK_SC',sans-serif]">
      <Ribbon />
      <div className="flex min-h-0 flex-1">
        <LeftStrip />
        <div className="flex min-w-0 flex-1 flex-col">
          <MainTabs active={mainTab} onSelect={setMainTab} />
          <div className="flex min-h-0 flex-1">
            <ProjectTree />
            <main className="flex min-w-0 flex-1 flex-col font-['Noto_Sans_CJK_SC',sans-serif]">
              <div className="relative min-h-0 flex-1 overflow-hidden">
                <BudgetTable />
                {/* Highlight marks over the grid */}
                <span className="pointer-events-none absolute top-[364px] left-[132px] h-[26px] w-[58px] rounded-xs border-3 border-[#ff1e10]" />
                <span className="pointer-events-none absolute top-[361px] left-[407px] h-[98px] w-[63px] rounded-xs border-3 border-[#ff1e10]" />
                <span className="pointer-events-none absolute top-[365px] left-[1355px] h-[92px] w-[79px] rounded-xs border-3 border-[#ff1e10]" />
              </div>
              <div className="flex h-[14px] shrink-0 items-center bg-[#e8e8e8] pl-[5px]">
                <svg width="4" height="8" viewBox="0 0 4 8" aria-hidden="true"><path d="M4 0v8L0 4z" fill="#6d6d78" /></svg>
                <span className="ml-[5px] h-[10px] w-[87%] rounded-full bg-[#bfbfbf]" />
              </div>
              <DetailPanel active={detailTab} onSelect={setDetailTab} />
            </main>
          </div>
        </div>
      </div>
      <StatusBar />
    </div>
  );
};

export default App;
